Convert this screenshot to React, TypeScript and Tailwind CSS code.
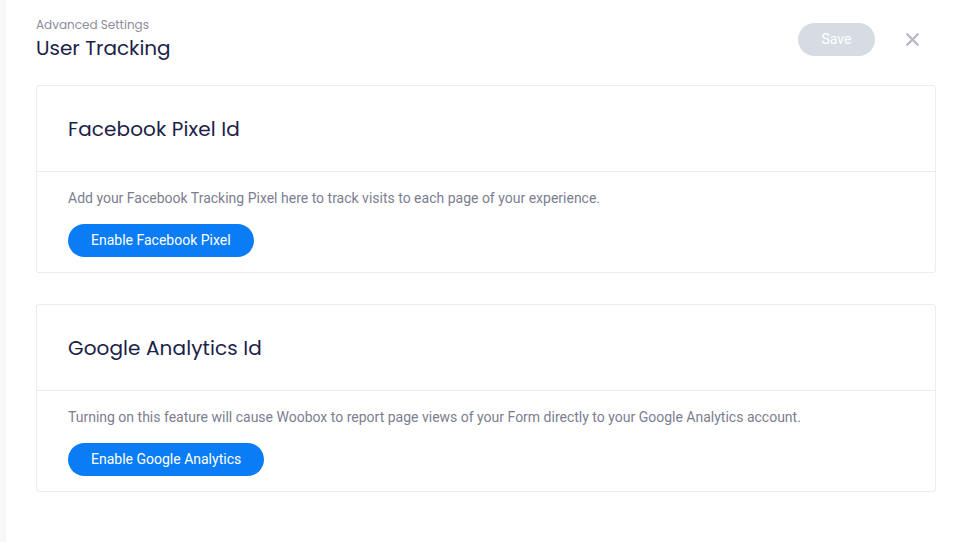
import React from "react";
import { X } from "lucide-react";

const heading = "font-['Poppins','Open_Sans',sans-serif]";
const body = "font-['Roboto',sans-serif]";

interface TrackingCardProps {
  title: string;
  description: string;
  action: string;
}

function TrackingCard({ title, description, action }: TrackingCardProps) {
  return (
    <div className="border border-[#ececef] rounded-[3px] bg-white">
      <div className="h-[86px] flex items-center px-[31px] border-b border-[#ececef]">
        <h2 className={`${heading} text-[20px] text-[#1b2147] tracking-[0.1px]`}>{title}</h2>
      </div>
      <div className="px-[31px] pt-[17px] pb-[15px]">
        <p className={`${body} text-[14px] leading-[18px] text-[#7c7e90]`}>{description}</p>
        <button
          type="button"
          className={`${body} mt-[17px] h-[33px] px-[23px] rounded-full bg-[#0a7cf6] text-white text-[14px]`}
        >
          {action}
        </button>
      </div>
    </div>
  );
}

export default function App() {
  return (
    <div className="w-[954px] h-[542px] flex bg-white overflow-hidden">
      <div className="w-[6px] bg-[#f8f8f9] shrink-0" />
      <div className="flex-1 pl-[30px] pr-[18px]">
        <div className="flex items-start justify-between pt-[17px]">
          <div>
            <div className={`${heading} text-[12px] text-[#8d8e99] leading-4`}>Advanced Settings</div>
            <h1 className={`${heading} text-[20px] text-[#1b2147] leading-7 mt-[1px]`}>User Tracking</h1>
          </div>
          <div className="flex items-center gap-[27px] pt-[6px] pr-[13px]">
            <button
              type="button"
              className={`${body} h-[33px] w-[77px] rounded-full bg-[#d6dbe4] text-white text-[14px]`}
            >
              Save
            </button>
            <X className="w-[21px] h-[21px] text-[#b7bac6]" strokeWidth={2.8} />
          </div>
        </div>
        <div className="mt-[23px] flex flex-col gap-[31px] w-[900px]">
          <TrackingCard
            title="Facebook Pixel Id"
            description="Add your Facebook Tracking Pixel here to track visits to each page of your experience."
            action="Enable Facebook Pixel"
          />
          <TrackingCard
            title="Google Analytics Id"
            description="Turning on this feature will cause Woobox to report page views of your Form directly to your Google Analytics account."
            action="Enable Google Analytics"
          />
        </div>
      </div>
    </div>
  );
}
